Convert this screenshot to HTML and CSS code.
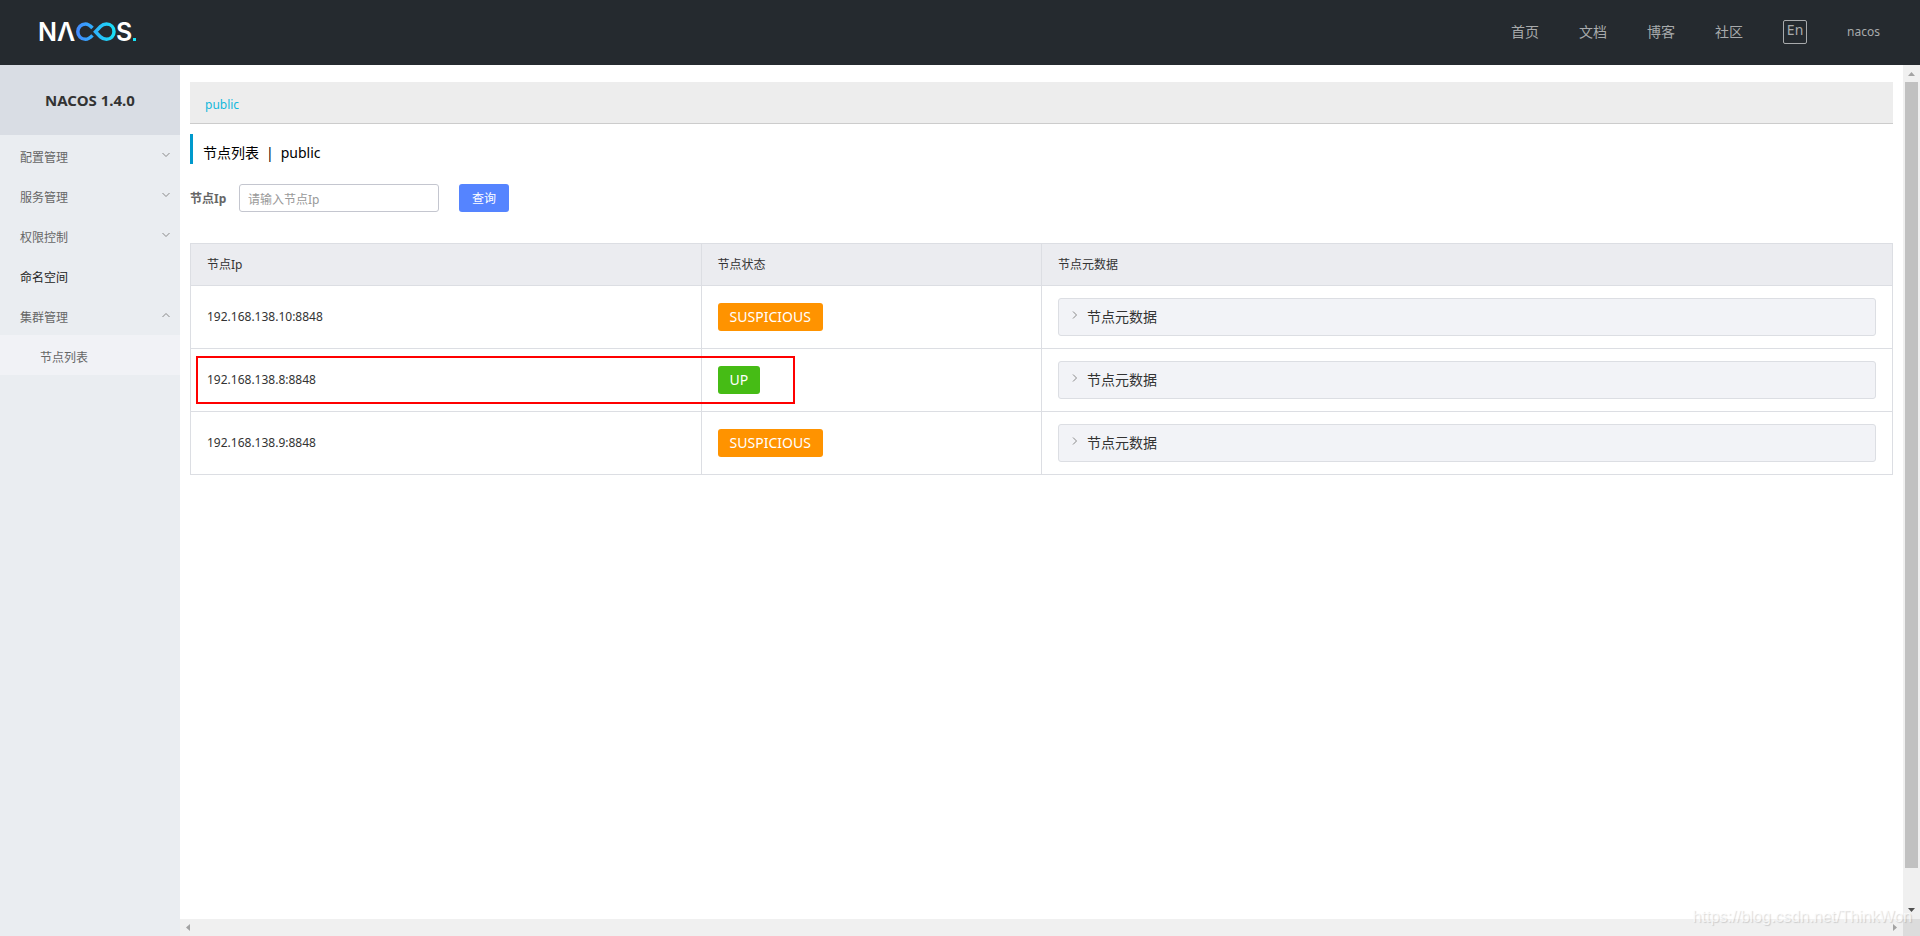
FILE: index.html
```html
<!DOCTYPE html>
<html lang="zh-CN">
<head>
<meta charset="utf-8">
<title>NACOS</title>
<link rel="stylesheet" href="styles.css">
</head>
<body>
<svg class="sprite" aria-hidden="true">
  <symbol id="chevron" viewBox="0 0 8 8"><path d="M0.5 2 L4 5.5 L7.5 2" fill="none" stroke="currentColor"/></symbol>
</svg>
<div class="app">
  <header class="topbar">
    <a class="logo" href="#" aria-label="NACOS">
      <svg width="104" height="40" viewBox="-2 -8 104 40">
        <defs>
          <linearGradient id="loop" gradientUnits="userSpaceOnUse" x1="36" y1="0" x2="76" y2="0">
            <stop offset="0" stop-color="#4488ff"/>
            <stop offset="1" stop-color="#16e3f7"/>
          </linearGradient>
        </defs>
        <text class="logo-text" x="-2" y="21">N</text>
        <text class="logo-text" x="17" y="21">Λ</text>
        <path d="M52.500 8 C49.500 4.900 48 4 45.500 4 C41 4 37.800 7.500 37.800 11.700 C37.800 16 41 19.300 45.500 19.300 C48 19.300 49.500 18.500 52.500 15.400" fill="none" stroke="url(#loop)" stroke-width="3.500"/>
        <path d="M55.500 11.700 L60.500 6.500 C62.500 4.600 64.500 4 66.500 4 C70.800 4 74 7.200 74 11.700 C74 16 70.800 19.300 66.500 19.300 C64.500 19.300 62.500 18.700 60.500 16.900 Z" fill="none" stroke="url(#loop)" stroke-width="3.500"/>
        <text class="logo-text" x="76" y="21">S</text>
        <rect x="93" y="18" width="3" height="3" fill="#16e3f7"/>
      </svg>
    </a>
    <nav class="topnav">
      <a href="#">首页</a>
      <a href="#">文档</a>
      <a href="#">博客</a>
      <a href="#">社区</a>
      <button class="lang" type="button">En</button>
      <a class="user" href="#">nacos</a>
    </nav>
  </header>
  <div class="body">
    <aside class="sidebar">
      <h1 class="product">NACOS 1.4.0</h1>
      <nav class="menu">
        <a class="menu-item" href="#">配置管理<svg class="chevron"><use href="#chevron"/></svg></a>
        <a class="menu-item" href="#">服务管理<svg class="chevron"><use href="#chevron"/></svg></a>
        <a class="menu-item" href="#">权限控制<svg class="chevron"><use href="#chevron"/></svg></a>
        <a class="menu-item leaf" href="#">命名空间</a>
        <a class="menu-item" href="#">集群管理<svg class="chevron up"><use href="#chevron"/></svg></a>
        <a class="menu-item sub" href="#">节点列表</a>
      </nav>
    </aside>
    <main class="content">
      <div class="namespaces"><a href="#">public</a></div>
      <h2 class="title"><span>节点列表</span><span>|</span><span>public</span></h2>
      <form class="search">
        <label for="ip">节点Ip</label>
        <input id="ip" type="text" placeholder="请输入节点Ip">
        <button type="button">查询</button>
      </form>
      <div class="table-wrap">
        <table class="nodes">
          <thead>
            <tr><th class="col-ip">节点Ip</th><th class="col-state">节点状态</th><th>节点元数据</th></tr>
          </thead>
          <tbody>
            <tr>
              <td>192.168.138.10:8848</td>
              <td><span class="tag warn">SUSPICIOUS</span></td>
              <td><button class="panel" type="button"><svg class="chevron right"><use href="#chevron"/></svg>节点元数据</button></td>
            </tr>
            <tr>
              <td>192.168.138.8:8848</td>
              <td><span class="tag ok">UP</span></td>
              <td><button class="panel" type="button"><svg class="chevron right"><use href="#chevron"/></svg>节点元数据</button></td>
            </tr>
            <tr>
              <td>192.168.138.9:8848</td>
              <td><span class="tag warn">SUSPICIOUS</span></td>
              <td><button class="panel" type="button"><svg class="chevron right"><use href="#chevron"/></svg>节点元数据</button></td>
            </tr>
          </tbody>
        </table>
        <div class="highlight"></div>
      </div>
    </main>
    <div class="vbar">
      <svg width="7" height="4" viewBox="0 0 7 4"><path d="M0 4 L3.500 0 L7 4 Z" fill="#a3a3a3"/></svg>
      <div class="thumb"></div>
      <svg width="7" height="4" viewBox="0 0 7 4"><path d="M0 0 L3.500 4 L7 0 Z" fill="#505050"/></svg>
    </div>
    <div class="hbar">
      <svg width="4" height="7" viewBox="0 0 4 7"><path d="M4 0 L0 3.500 L4 7 Z" fill="#a3a3a3"/></svg>
      <svg width="4" height="7" viewBox="0 0 4 7"><path d="M0 0 L4 3.500 L0 7 Z" fill="#a3a3a3"/></svg>
    </div>
    <div class="corner"></div>
  </div>
  <div class="watermark">https://blog.csdn.net/ThinkWon</div>
</div>
</body>
</html>
```
FILE: styles.css
```css
* { box-sizing: border-box; }

body {
  margin: 0;
  font: 12px/18px "Noto Sans", "Noto Sans CJK SC", sans-serif;
  color: #333;
  background: #fff;
}

a { color: inherit; text-decoration: none; }
button, input { font: inherit; color: inherit; }
.sprite { display: none; }

.app {
  position: relative;
  display: flex;
  flex-direction: column;
  min-height: 100vh;
}

.topbar {
  display: flex;
  align-items: center;
  justify-content: space-between;
  height: 65px;
  padding: 0 40px 1px 38px;
  background: #252a2f;
}

.logo { display: flex; }
.logo-text { font: 600 25px "Inter", sans-serif; fill: #fff; }

.topnav {
  display: flex;
  align-items: center;
  gap: 40px;
  font-size: 14px;
  color: #a8aaac;
}

.lang {
  width: 24px;
  height: 24px;
  padding: 0 0 4px;
  border: 1px solid #a8aaac;
  border-radius: 2px;
  background: none;
  line-height: 18px;
}

.user { font-size: 12px; }

.body {
  flex: 1;
  display: grid;
  grid-template-columns: 180px 1fr 17px;
  grid-template-rows: 1fr 17px;
}

.sidebar { grid-row: span 2; background: #eaedf1; }

.product {
  margin: 0;
  font-size: 15px;
  line-height: 70px;
  text-align: center;
  background: #d9dde4;
}

.menu-item {
  display: flex;
  justify-content: space-between;
  height: 40px;
  padding: 0 10px 0 20px;
  line-height: 45px;
  color: #666;
}

.leaf { color: #222; }
.sub { padding-left: 40px; background: #f1f2f6; }

.chevron { width: 8px; height: 8px; color: #888; }
.menu-item .chevron { margin-top: 16px; }
.up { transform: rotate(180deg); }
.right { transform: rotate(-90deg); }

.content { padding: 17px 10px; }

.namespaces {
  height: 42px;
  padding: 0 15px;
  line-height: 45px;
  color: #12b8dc;
  background: #ededed;
  border-bottom: 1px solid #ccc;
}

.title {
  display: flex;
  gap: 7px;
  height: 30px;
  margin: 10px 0 20px;
  padding-left: 10px;
  border-left: 3px solid #09c;
  font-size: 14px;
  font-weight: 400;
  line-height: 38px;
  color: #000;
}

.search { display: flex; align-items: center; height: 28px; }
.search label { width: 49px; padding-top: 2px; font-weight: 700; color: #666; }

.search input {
  width: 200px;
  height: 28px;
  padding: 2px 8px 0;
  border: 1px solid #c4c6cf;
  border-radius: 3px;
}

.search input::placeholder { color: #999; }

.search button {
  width: 50px;
  height: 28px;
  margin-left: 20px;
  padding: 2px 0 0;
  border: 0;
  border-radius: 3px;
  color: #fff;
  background: #5584ff;
}

.table-wrap { position: relative; margin-top: 31px; }

.nodes {
  width: 100%;
  border-collapse: collapse;
  table-layout: fixed;
}

.col-ip { width: 30%; }
.col-state { width: 20%; }

.nodes th, .nodes td {
  padding: 12px 16px;
  border: 1px solid #dcdee3;
  text-align: left;
}

.nodes th { padding-bottom: 11px; font-weight: 400; background: #ebecf0; }

.tag {
  display: inline-block;
  padding: 0 12px;
  border-radius: 3px;
  font-size: 14px;
  line-height: 28px;
  color: #fff;
}

.warn { background: #ff9300; }
.ok { background: #46bc15; }

.panel {
  display: flex;
  align-items: center;
  gap: 8px;
  width: 100%;
  height: 38px;
  padding: 0 12px;
  border: 1px solid #dcdee3;
  border-radius: 3px;
  font-size: 14px;
  background: #f2f3f7;
}

.panel .chevron { margin-bottom: 4px; }

.highlight {
  position: absolute;
  top: 113px;
  left: 6px;
  width: calc(30% + 88px);
  height: 48px;
  border: 2px solid #f00;
}

.vbar {
  display: flex;
  flex-direction: column;
  align-items: center;
  padding: 7px 2px;
  background: #f0f0f0;
}

.thumb { flex: 1; width: 100%; margin: 6px 0 40px; background: #c1c1c1; }

.hbar {
  display: flex;
  align-items: center;
  justify-content: space-between;
  padding: 0 6px;
  background: #f0f0f0;
}

.corner { background: #dcdcdc; }

.watermark {
  position: absolute;
  right: 8px;
  bottom: 10px;
  font: 16px/18px "Liberation Sans", sans-serif;
  color: rgba(255, 255, 255, 0.7);
  text-shadow: 1px 1px 1px rgba(0, 0, 0, 0.15);
}
```
